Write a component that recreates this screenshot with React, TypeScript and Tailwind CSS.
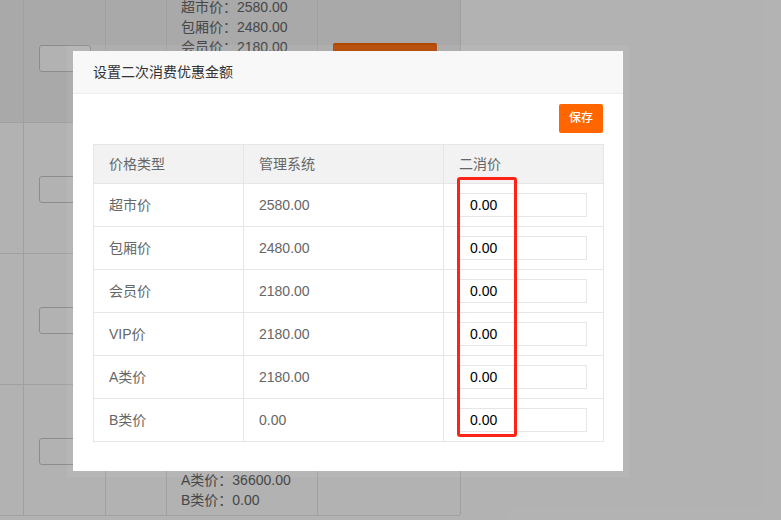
import React from "react";

const bgRows: string[][] = [
  ["超市价：2580.00", "包厢价：2480.00", "会员价：2180.00", "VIP价：2180.00", "A类价：2180.00", "B类价：0.00"],
  ["超市价：3580.00", "包厢价：3480.00", "会员价：3180.00", "VIP价：3180.00", "A类价：3180.00", "B类价：0.00"],
  ["超市价：12800.00", "包厢价：12600.00", "会员价：12000.00", "VIP价：12000.00", "A类价：12000.00", "B类价：0.00"],
  ["超市价：38800.00", "包厢价：38600.00", "会员价：36600.00", "VIP价：36600.00", "A类价：36600.00", "B类价：0.00"],
];

const modalRows: [string, string][] = [
  ["超市价", "2580.00"],
  ["包厢价", "2480.00"],
  ["会员价", "2180.00"],
  ["VIP价", "2180.00"],
  ["A类价", "2180.00"],
  ["B类价", "0.00"],
];

function BgRow({ lines, hover }: { lines: string[]; hover?: boolean }) {
  return (
    <div className={`flex border-b border-[#e6e6e6] ${hover ? "bg-[#f2f2f2]" : "bg-white"}`}>
      <div className="w-[24px] shrink-0 border-r border-[#e6e6e6]" />
      <div className="w-[82px] shrink-0 border-r border-[#e6e6e6] flex items-center pl-[15px] pt-[3px]">
        <div className="w-[52px] h-[27px] rounded-[3px] border border-[#c9c9c9] bg-white" />
      </div>
      <div className="w-[61px] shrink-0 border-r border-[#e6e6e6]" />
      <div className="w-[151px] shrink-0 border-r border-[#e6e6e6] py-[5px] pl-[14px] text-[14px] leading-[20px] text-[#666]">
        {lines.map((l, i) => (
          <div key={i} className="whitespace-nowrap">{l}</div>
        ))}
      </div>
      <div className="w-[143px] shrink-0 border-r border-[#e6e6e6] flex items-center pl-[15px]">
        <div className="w-[104px] h-[29px] rounded-[2px] bg-[#ff6600]" />
      </div>
    </div>
  );
}

export default function App() {
  return (
    <div className="relative w-[781px] h-[520px] overflow-hidden bg-white font-['Liberation_Sans','Noto_Sans_CJK_SC',sans-serif]">
      <div className="w-[460px] -mt-[8px]">
        {bgRows.map((r, i) => (
          <BgRow key={i} lines={r} hover={i === 0} />
        ))}
      </div>

      <div className="absolute inset-0 bg-black/30" />

      <div className="absolute left-[67px] top-[45px] border-[6px] border-white/[0.06]">
        <div className="relative w-[550px] h-[420px] bg-white">
          <div className="h-[43px] bg-[#f8f8f8] border-b border-[#eee] pl-[20px] flex items-center text-[14px] text-[#333]">
            设置二次消费优惠金额
          </div>
          <div className="px-[20px] pt-[10px]">
            <div className="flex justify-end">
              <button className="h-[29px] px-[10px] rounded-[2px] bg-[#ff6600] text-white text-[12px] leading-[29px] font-medium">
                保存
              </button>
            </div>
            <table className="mt-[11px] w-[510px] border-collapse table-fixed text-[14px] text-[#666]">
              <colgroup>
                <col className="w-[150px]" />
                <col className="w-[200px]" />
                <col className="w-[160px]" />
              </colgroup>
              <thead>
                <tr className="bg-[#f2f2f2]">
                  <th className="border border-[#e6e6e6] px-[15px] py-[9px] leading-[20px] text-left font-normal">价格类型</th>
                  <th className="border border-[#e6e6e6] px-[15px] py-[9px] leading-[20px] text-left font-normal">管理系统</th>
                  <th className="border border-[#e6e6e6] px-[15px] py-[9px] leading-[20px] text-left font-normal">二消价</th>
                </tr>
              </thead>
              <tbody>
                {modalRows.map(([name, val]) => (
                  <tr key={name}>
                    <td className="border border-[#e6e6e6] px-[15px] py-[9px] leading-[24px]">{name}</td>
                    <td className="border border-[#e6e6e6] px-[15px] py-[9px] leading-[24px]">{val}</td>
                    <td className="border border-[#e6e6e6] px-[15px] py-[9px]">
                      <input
                        readOnly
                        value="0.00"
                        className="block w-[128px] h-[24px] border border-[#e6e6e6] pl-[10px] text-[14px] text-black outline-none bg-white"
                      />
                    </td>
                  </tr>
                ))}
              </tbody>
            </table>
          </div>
          <div className="absolute left-[384px] top-[126px] w-[60px] h-[260px] border-[3px] border-[#fb2416] rounded-[3px]" />
        </div>
      </div>
    </div>
  );
}
